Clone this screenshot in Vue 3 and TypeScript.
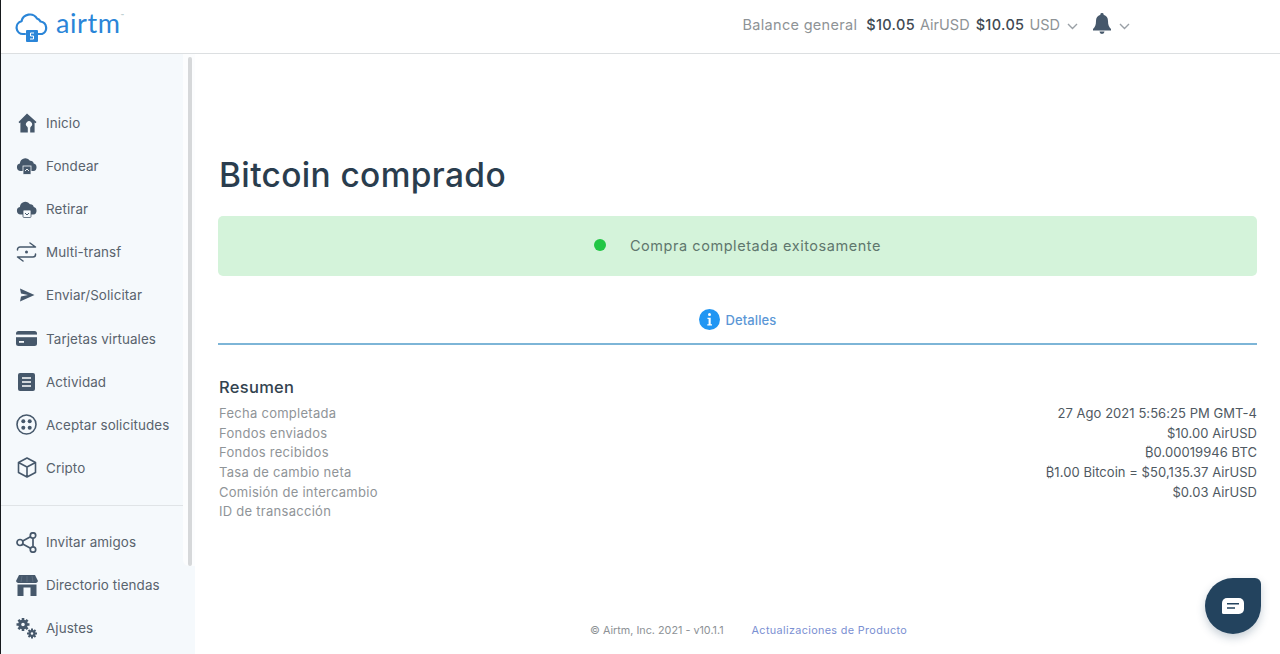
<script setup lang="ts">
interface NavItem { label: string; icon: string }
const primary: NavItem[] = [
  { label: 'Inicio', icon: 'home' },
  { label: 'Fondear', icon: 'fund' },
  { label: 'Retirar', icon: 'withdraw' },
  { label: 'Multi-transf', icon: 'multi' },
  { label: 'Enviar/Solicitar', icon: 'send' },
  { label: 'Tarjetas virtuales', icon: 'card' },
  { label: 'Actividad', icon: 'activity' },
  { label: 'Aceptar solicitudes', icon: 'accept' },
  { label: 'Cripto', icon: 'crypto' }
]
const secondary: NavItem[] = [
  { label: 'Invitar amigos', icon: 'share' },
  { label: 'Directorio tiendas', icon: 'store' },
  { label: 'Ajustes', icon: 'gears' }
]
const rows: [string, string][] = [
  ['Fecha completada', '27 Ago 2021 5:56:25 PM GMT-4'],
  ['Fondos enviados', '$10.00 AirUSD'],
  ['Fondos recibidos', '₿0.00019946 BTC'],
  ['Tasa de cambio neta', '₿1.00 Bitcoin = $50,135.37 AirUSD'],
  ['Comisión de intercambio', '$0.03 AirUSD'],
  ['ID de transacción', '']
]
</script>

<template>
  <div class="app">
    <header class="top">
      <div class="brand">
        <svg class="logo" width="36" height="29" viewBox="0 0 36 29" fill="none">
          <path d="M10 21H8a6.5 6.5 0 0 1-1.500-12.800A8.500 8.500 0 0 1 22 5.500a6 6 0 0 1 3.500 3A6.500 6.500 0 0 1 27 21h-7" stroke="#2a85d8" stroke-width="2.200" stroke-linecap="round"/>
          <rect x="11" y="17" width="12" height="12" rx="1" fill="#2a85d8"/>
          <path d="M19 20.500h-3.500v3h3v3h-3.500" stroke="#fff" stroke-width="1" transform="translate(0 -.5)"/>
        </svg>
        <span class="word">airtm</span><span class="tm">™</span>
      </div>
      <div class="balance">
        <span class="muted bal-label">Balance general</span>
        <strong>$10.05</strong><span class="muted">AirUSD</span>
        <strong class="second">$10.05</strong><span class="muted">USD</span>
        <svg class="chev" width="11" height="7" viewBox="0 0 11 7"><path d="M1 1l4.500 4.500L10 1" fill="none" stroke="#9aa0a6" stroke-width="1.400"/></svg>
        <svg class="bell" width="18" height="21" viewBox="0 0 18 21"><path d="M9 0a1.600 1.600 0 0 1 1.600 1.800C13.500 2.600 15 5 15 8c0 4 1 6 3 8v1.500H0V16c2-2 3-4 3-8 0-3 1.500-5.400 4.400-6.200A1.600 1.600 0 0 1 9 0zM6.500 18.500h5a2.500 2.500 0 0 1-5 0z" fill="#46586b"/></svg>
        <svg class="chev" width="11" height="7" viewBox="0 0 11 7"><path d="M1 1l4.500 4.500L10 1" fill="none" stroke="#9aa0a6" stroke-width="1.400"/></svg>
      </div>
    </header>

    <div class="body">
      <aside class="side">
        <nav class="group first">
          <a v-for="item in primary" :key="item.label" class="item">
            <span class="ico">
              <svg v-if="item.icon === 'home'" width="20" height="20" viewBox="0 0 20 20"><path fill-rule="evenodd" d="M10 .5l9.500 8.500-1 1.300-.9-.7V19.500h-4.400v-4.300a2.200 2.200 0 0 1 .8-1.700 3 3 0 1 0-4 0 2.200 2.200 0 0 1 .8 1.700v4.300H3.400V9.600l-.9.700-1-1.300z" fill="#46586b"/></svg>
              <svg v-else-if="item.icon === 'fund'" width="22" height="18" viewBox="0 0 22 18"><path d="M6 14H4.500a3.800 3.800 0 0 1-.6-7.500A5.500 5.500 0 0 1 14 3.800a3.500 3.500 0 0 1 3.700 2.800A3.800 3.800 0 0 1 17.500 14H16" fill="#46586b"/><rect x="7" y="9" width="8" height="8.500" fill="#46586b" stroke="#f5f9fc" stroke-width=".8"/><path d="M9 14l2-2 2 2" stroke="#fff" fill="none" stroke-width=".9"/></svg>
              <svg v-else-if="item.icon === 'withdraw'" width="22" height="18" viewBox="0 0 22 18"><path d="M6 14.500H4.500a3.800 3.800 0 0 1-.6-7.500A5.500 5.500 0 0 1 14 4.300a3.500 3.500 0 0 1 3.700 2.800 3.800 3.800 0 0 1-.2 7.400H16" fill="#46586b"/><rect x="7" y="10" width="8" height="7.500" rx="1" fill="#f5f9fc" stroke="#46586b" stroke-width=".8"/><path d="M9 13l2 2 2-2" stroke="#46586b" fill="none" stroke-width="1"/></svg>
              <svg v-else-if="item.icon === 'multi'" width="21" height="20" viewBox="0 0 21 20" fill="none" stroke="#46586b" stroke-width="1.500" stroke-linecap="round" stroke-linejoin="round"><path d="M1.500 8V7.500a2.500 2.500 0 0 1 2.500-2.500h15.500L14 1"/><path d="M19.500 12v.5a2.500 2.500 0 0 1-2.500 2.500H1.500L7 19"/><circle cx="10.500" cy="10" r="1.500" fill="#46586b" stroke="none"/></svg>
              <svg v-else-if="item.icon === 'send'" width="16" height="14" viewBox="0 0 16 14"><path d="M1 .5L15.500 7 1 13.500l1-5L9 7 2 5.500z" fill="#46586b"/></svg>
              <svg v-else-if="item.icon === 'card'" width="21" height="15" viewBox="0 0 21 15"><rect width="21" height="15" rx="2.500" fill="#46586b"/><rect y="3.600" width="21" height="2.600" fill="#f5f9fc"/><rect x="3" y="10" width="5" height="1.800" fill="#f5f9fc"/></svg>
              <svg v-else-if="item.icon === 'activity'" width="17" height="18" viewBox="0 0 17 18"><rect width="17" height="18" rx="2" fill="#46586b"/><path d="M4 5h9M4 9h9M4 13h9" stroke="#fff" stroke-width="1.500"/></svg>
              <svg v-else-if="item.icon === 'accept'" width="21" height="21" viewBox="0 0 21 21"><circle cx="10.500" cy="10.500" r="9.500" fill="none" stroke="#46586b" stroke-width="1.600"/><g fill="#46586b"><circle cx="7.300" cy="7.300" r="2"/><circle cx="13.700" cy="7.300" r="2"/><circle cx="7.300" cy="13.700" r="2"/><circle cx="13.700" cy="13.700" r="2"/></g></svg>
              <svg v-else width="20" height="21" viewBox="0 0 20 21" fill="none" stroke="#46586b" stroke-width="1.600" stroke-linejoin="round"><path d="M10 1l8.500 4.500v10L10 20l-8.500-4.500v-10zM1.500 5.500L10 10l8.500-4.500M10 10v10"/></svg>
            </span>
            <span>{{ item.label }}</span>
          </a>
        </nav>
        <div class="divider"></div>
        <nav class="group">
          <a v-for="item in secondary" :key="item.label" class="item">
            <span class="ico">
              <svg v-if="item.icon === 'share'" width="21" height="21" viewBox="0 0 21 21" fill="none" stroke="#46586b" stroke-width="1.700"><circle cx="4" cy="10.500" r="3"/><circle cx="17" cy="3.500" r="2.700"/><circle cx="17" cy="17.500" r="2.700"/><path d="M6.700 9l7.800-4.200M6.700 12l7.800 4.200M17 6.200v8.600"/></svg>
              <svg v-else-if="item.icon === 'store'" width="22" height="21" viewBox="0 0 22 21"><path d="M3 0h16l3 6a2.500 2.500 0 0 1-2 2H2a2.500 2.500 0 0 1-2-2z" fill="#46586b"/><path d="M6 1 5 7M11 1v6M16 1l1 6" stroke="#6a7b8c" stroke-width=".6"/><path fill-rule="evenodd" d="M1.500 9.500h19V21h-19zM7.500 12.500V21h7v-8.500z" fill="#46586b"/></svg>
              <svg v-else width="21" height="21" viewBox="0 0 21 21"><path d="M7 0v3M7 10v3M.5 6.500h3M10.500 6.500h3M2.400 1.900l2 2M9.600 9.100l2 2M11.600 1.900l-2 2M4.400 9.100l-2 2" stroke="#46586b" stroke-width="2.600"/><circle cx="7" cy="6.500" r="3.300" fill="none" stroke="#46586b" stroke-width="3"/><path d="M16 10.500v2.500M16 18v2.500M11 15.500h2.500M18.500 15.500H21M12.500 12l1.700 1.700M17.800 17.300l1.700 1.700M19.500 12l-1.700 1.700M14.200 17.300 12.500 19" stroke="#46586b" stroke-width="2"/><circle cx="16" cy="15.500" r="2.400" fill="none" stroke="#46586b" stroke-width="2.200"/></svg>
            </span>
            <span>{{ item.label }}</span>
          </a>
        </nav>
        <div class="track"><div class="thumb"></div></div>
      </aside>

      <main class="main">
        <h1>Bitcoin comprado</h1>
        <div class="banner">
          <i class="dot"></i>
          <span>Compra completada exitosamente</span>
        </div>
        <div class="tabs">
          <svg width="21" height="21" viewBox="0 0 21 21"><circle cx="10.500" cy="10.500" r="10.500" fill="#2196f3"/><circle cx="10.500" cy="5.500" r="1.500" fill="#fff"/><path d="M8.500 8.700h3.200v6.500h1.300v1.400H8.300v-1.400h1.300v-5.100H8.500z" fill="#fff"/></svg>
          <span>Detalles</span>
        </div>
        <section class="summary">
          <h2>Resumen</h2>
          <div v-for="row in rows" :key="row[0]" class="row">
            <span class="k">{{ row[0] }}</span>
            <span class="v">{{ row[1] }}</span>
          </div>
        </section>
        <footer class="foot">
          <span>© Airtm, Inc. 2021 - v10.1.1</span>
          <a>Actualizaciones de Producto</a>
        </footer>
      </main>
    </div>

    <button class="chat" aria-label="Chat">
      <svg width="22" height="16" viewBox="0 0 22 16"><path d="M5 0h12a5 5 0 0 1 5 5v6a5 5 0 0 1-5 5H1.500A1.500 1.500 0 0 1 0 14.500V5a5 5 0 0 1 5-5z" fill="#fff"/><path d="M5 5.700h12M5 10h8" stroke="#23435e" stroke-width="1.600"/></svg>
    </button>
  </div>
</template>

<style>
html, body { margin: 0; background: #fff; }
</style>

<style scoped>
.app {
  position: relative;
  height: 654px;
  overflow: hidden;
  display: flex;
  flex-direction: column;
  border-left: 1px solid #16191c;
  box-sizing: border-box;
  font-family: Inter, "Liberation Sans", sans-serif;
  background: #fff;
  color: #4a5560;
}
.top {
  height: 53px;
  flex: none;
  border-bottom: 1px solid #dcdfe1;
  display: flex;
  justify-content: space-between;
  align-items: center;
  padding: 0 150px 0 14px;
}
.brand { display: flex; align-items: center; color: #2a85d8; margin-top: -6px; }
.logo { margin-right: 5px; margin-top: 7px; }
.word { font-size: 27px; font-family: Lato, sans-serif; letter-spacing: .6px; line-height: 1; margin-top: -2px; }
.tm { font-size: 5px; color: #8aa; margin-top: -16px; }
.balance { display: flex; align-items: center; gap: 5px; font-size: 14.500px; margin-top: -4px; }
.balance strong { font-weight: 450; color: #3f4a54; font-size: 14.500px; margin-left: 4px; letter-spacing: .35px; }
.balance strong.second { margin-left: 1px; }
.muted { color: #8e9396; font-weight: 400; }
.bal-label { letter-spacing: .3px; }
.chev { margin-left: 2px; margin-top: 3px; }
.bell { margin-left: 10px; margin-top: -2px; }
.bell + .chev { margin-left: 3px; }
.body { flex: 1; min-height: 0; display: flex; }
.side {
  position: relative;
  width: 194px;
  flex: none;
  box-sizing: border-box;
  background: #f5f9fc;
  padding-top: 47.500px;
}
.group.first { margin-bottom: 15.500px; }
.item {
  width: 183px;
  height: 43.120px;
  display: flex;
  align-items: center;
  font-size: 13.400px;
  color: #59636d;
  font-weight: 400;
  letter-spacing: .1px;
}
.ico {
  width: 45px;
  padding: 0 8px 0 14px;
  box-sizing: border-box;
  flex: none;
  display: flex;
  align-items: center;
  justify-content: center;
}
.divider { width: 182px; height: 1px; background: #e0e4e7; margin-bottom: 14.500px; }
.track {
  position: absolute;
  left: 182px;
  top: 0;
  width: 12px;
  height: 512px;
  background: #fcfdfe;
  border-radius: 0 0 0 6px;
}
.thumb {
  position: absolute;
  left: 5px;
  top: 3px;
  width: 4px;
  height: 509px;
  background: #d6d8da;
  border-radius: 2px;
}
.main {
  flex: 1;
  min-width: 0;
  position: relative;
  display: flex;
  flex-direction: column;
  padding: 0 23px 0 23px;
  background: #fff;
}
h1 {
  margin: 100px 0 19px 1px;
  font-size: 33.500px;
  line-height: 43px;
  font-weight: 450;
  color: #2a3d4e;
  letter-spacing: .35px;
}
.banner {
  height: 60px;
  box-sizing: border-box;
  padding-bottom: 2px;
  border-radius: 5px;
  background: #d4f3da;
  display: flex;
  align-items: center;
  justify-content: center;
  gap: 24px;
  font-size: 14.500px;
  color: #5f776d;
  letter-spacing: .55px;
}
.dot { width: 12px; height: 12px; border-radius: 50%; background: #21c644; }
.tabs {
  height: 69px;
  box-sizing: border-box;
  padding-top: 20px;
  border-bottom: 2px solid #7db5d7;
  display: flex;
  align-items: center;
  justify-content: center;
  gap: 6px;
  font-size: 13px;
  font-weight: 450;
  color: #5b97d6;
  letter-spacing: .1px;
}
.summary { margin-top: 31px; padding-left: 1px; }
h2 { margin: 0 0 6px; font-size: 16.500px; line-height: 22px; font-weight: 450; color: #33434f; letter-spacing: .3px; }
.row { display: flex; justify-content: space-between; height: 19.700px; line-height: 19.700px; font-size: 13px; }
.k { color: #8f9498; letter-spacing: .27px; }
.v { color: #4f5962; letter-spacing: .05px; }
.foot {
  position: absolute;
  left: 395px;
  top: 570px;
  display: flex;
  gap: 28px;
  font-size: 10.800px;
  color: #8d9296;
}
.foot a { color: #7a8fd2; letter-spacing: .36px; }
.chat {
  position: absolute;
  left: 1204px;
  top: 578px;
  width: 56px;
  height: 56px;
  padding: 0;
  border: 0;
  border-radius: 50% 6px 50% 50%;
  background: #23435e;
  box-shadow: 0 4px 8px rgba(35, 67, 94, .25);
  display: flex;
  align-items: center;
  justify-content: center;
}
</style>
